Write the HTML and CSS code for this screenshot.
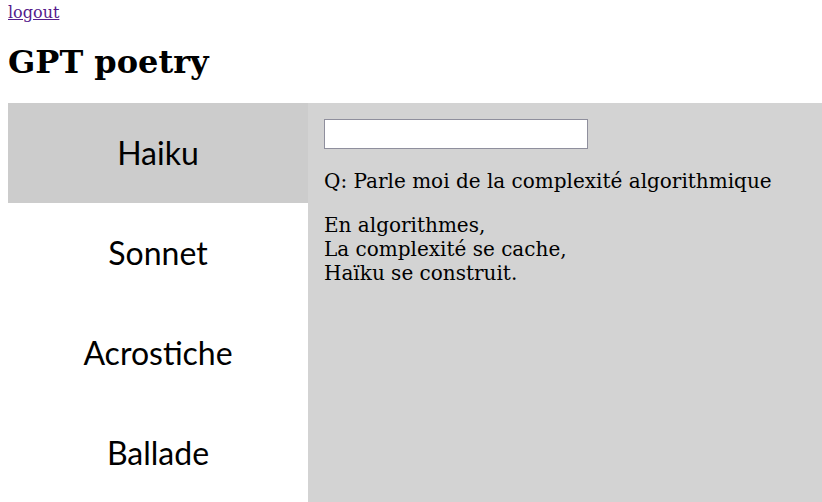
FILE: index.html
```html
<!DOCTYPE html>
<html>
<head>
<meta charset="utf-8">
<link rel="stylesheet" href="styles.css">
</head>
<body>
<a class="logout" href="#">logout</a>
<h1 class="title">GPT poetry</h1>
<div class="app">
  <div class="tabs">
    <button class="tab active">Haiku</button>
    <button class="tab">Sonnet</button>
    <button class="tab">Acrostiche</button>
    <button class="tab">Ballade</button>
  </div>
  <div class="panel">
    <input class="prompt" type="text">
    <p class="question">Q: Parle moi de la complexité algorithmique</p>
    <p class="answer">En algorithmes,<br>La complexité se cache,<br>Haïku se construit.</p>
  </div>
</div>
</body>
</html>
```
FILE: styles.css
```css
html, body {
  font-family: "DejaVu Serif", serif;
  font-size: 16px;
}
body {
  margin: 3px 0 0 8px;
  overflow: hidden;
}
.logout {
  color: #551a8b;
  text-decoration: underline;
}
.title {
  font-size: 32px;
  font-weight: bold;
  margin: 21.44px 0;
}
.app {
  display: flex;
  width: 814px;
}
.tabs {
  display: flex;
  flex-direction: column;
  width: 300px;
  flex: none;
}
.tab {
  height: 100px;
  width: 300px;
  border: none;
  background: #ffffff;
  font-family: Lato, sans-serif;
  font-size: 32px;
  color: #000;
  padding: 0;
  margin: 0;
}
.tab.active {
  background: #cccccc;
}
.panel {
  flex: 1;
  background: #d3d3d3;
  padding: 16px;
  min-height: 400px;
}
.prompt {
  display: block;
  box-sizing: border-box;
  width: 264px;
  height: 30px;
  border: 1px solid #8f8f9d;
  border-radius: 0;
  background: #fff;
  margin: 0;
}
.question, .answer {
  font-size: 20px;
  margin: 20px 0;
}
```
